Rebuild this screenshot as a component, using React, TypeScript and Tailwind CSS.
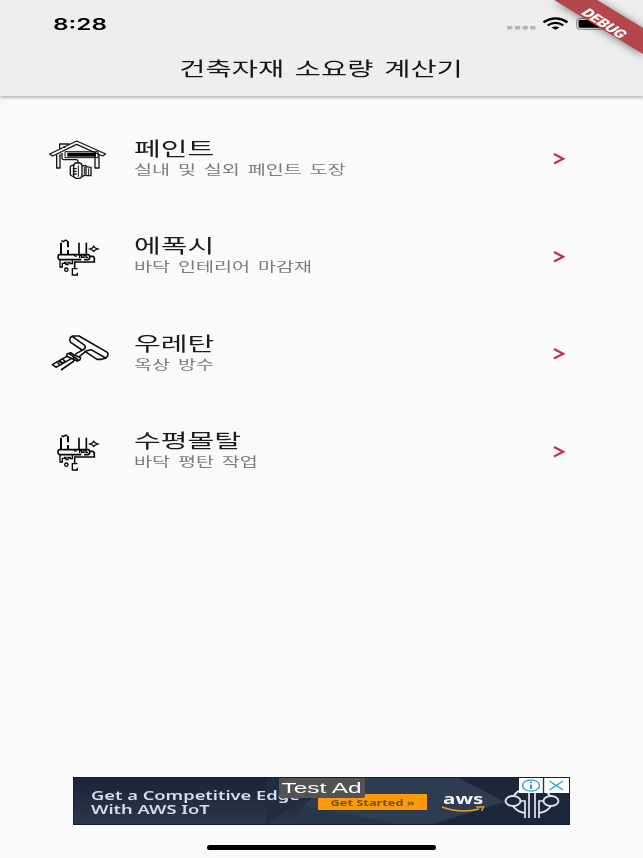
import React from 'react';

const kr = "font-['Noto_Sans_CJK_KR',sans-serif]";

function HouseIcon() {
  return (
    <svg width="90" height="60" viewBox="0 0 270 180" fill="none" stroke="#161616" strokeWidth="4" strokeLinejoin="round">
      <path d="M29 69L110 30L197 69L188 75L110 40L38 75Z" />
      <path d="M59 54V39H86V41M70 48H77" />
      <path d="M50 71V111H60V68M165 68V111H177V71" />
      <path d="M75 62H174V80H75Z" strokeWidth="3" />
      <path d="M82 71H168" stroke="#000" strokeWidth="12" />
      <path d="M66 66V82Q66 86 72 86H108Q114 86 114 92V97" />
      <path d="M105 96H119Q126 98 126 105V137L119 142H107L101 137V105Z" />
      <path d="M102 101L91 106V132L102 138M98 113H110M98 121H110M98 129H110M126 105L138 103V132L126 136M139 107L153 109V134H139" />
      <path d="M115 103V137M133 108V130M146 112V132" strokeWidth="3" />
    </svg>
  );
}

function TrowelIcon() {
  return (
    <svg width="90" height="60" viewBox="0 0 270 180" fill="none" stroke="#080808" strokeWidth="5">
      <path d="M63 44V80M84 40V58M84 66V80" strokeWidth="6" />
      <path d="M64 38L70 41L77 36L83 40" strokeWidth="4" />
      <path d="M117 44V82M139 44V79" />
      <path d="M58 80H145Q149 80 149 88Q149 95 143 95H132M124 95H58Q54 94 54 88Q54 80 58 80" />
      <path d="M102 80Q103 86 110 84M119 91V83H125V88H132V82H138V88H144" strokeWidth="4" />
      <path d="M149 85H158Q164 87 163 94V102H104V120" />
      <path d="M60 96V117H67V106H74V103H78V110H84V103H90V107H97V97" strokeWidth="4" />
      <circle cx="79" cy="125" r="5" strokeWidth="4" />
      <path d="M112 122H97V141H112V134" strokeWidth="4" />
      <path d="M149 63L157 60L161 55L166 60L174 63L166 66L161 70L157 66Z" strokeWidth="4" />
    </svg>
  );
}

function RollerIcon() {
  return (
    <svg width="90" height="60" viewBox="0 0 270 180" fill="none" stroke="#0c0c0c" strokeWidth="4.8" strokeLinejoin="round">
      <path d="M89 36L98 30H117L202 79Q206 83 203 90L197 97L184 100H171L135 76L153 71L197 96M97 31L134 58Q138 64 133 69L126 72L92 49Q87 42 91 35" />
      <path d="M131 70L105 85M137 76L118 92M81 84L92 80L101 86L122 95L120 101L112 105L80 91ZM87 83L114 101" />
      <path d="M80 91L37 116L50 125M102 105L63 132M94 98L48 124M51 108L60 117M59 104L69 113M68 99L75 106L67 113L58 106" />
      <path d="M100 91L102 105" />
    </svg>
  );
}

function Row({ icon, title, sub }: { icon: React.ReactNode; title: string; sub: string }) {
  return (
    <li className="flex h-[97.6px] items-start pl-10">
      <div className="h-[60px] w-[90px] shrink-0 pt-[20.5px]">{icon}</div>
      <div className="flex-1 pt-[24.5px] pl-[4px]">
        <div className={`${kr} h-[26px] origin-left scale-x-[1.5] text-[19.4px] leading-[26px] whitespace-nowrap text-[#1b1b1b]`}>{title}</div>
        <div className={`${kr} h-[16px] origin-left scale-x-[1.53] text-[12.8px] leading-[16px] [word-spacing:2.3px] whitespace-nowrap text-[#7c7c7c]`}>{sub}</div>
      </div>
      <svg className="mt-[42px] mr-[77px] shrink-0" width="14" height="14" viewBox="0 0 14 14" fill="none" stroke="#c2286a" strokeWidth="2.2">
        <path d="M2 2L11.2 6.8L2 11.6" />
      </svg>
    </li>
  );
}

export default function App() {
  return (
    <div className="relative flex h-[858px] w-[643px] flex-col overflow-hidden bg-[#fafafa]">
      <header className="flex h-24 shrink-0 flex-col bg-[#eeeeee] shadow-[0_1px_4px_rgba(0,0,0,0.4)]">
        <div className="flex h-[46px] items-center pl-[53px]">
          <span className="w-[453px] pt-[2px]">
            <span className="inline-block origin-left scale-x-[1.52] font-[Inter] text-[16px] leading-6 font-semibold text-black">8:28</span>
          </span>
          <svg width="112" height="20" viewBox="0 0 112 20" fill="none">
            <g fill="#b5b5b5">
              <rect x="1" y="13" width="5.5" height="3.5" rx="1" />
              <rect x="8.8" y="13" width="5.5" height="3.5" rx="1" />
              <rect x="16.4" y="13" width="5.5" height="3.5" rx="1" />
              <rect x="24" y="13" width="5.5" height="3.5" rx="1" />
            </g>
            <g stroke="#000" strokeWidth="2.3">
              <path d="M37.5 9.3Q49.5 1.6 61.5 9.3" />
              <path d="M41.7 12.4Q49.5 7.4 57.3 12.4" />
            </g>
            <path d="M45.5 14.6Q49.5 12.4 53.5 14.6L49.5 16.8Z" fill="#000" />
            <rect x="70.5" y="5.5" width="31" height="10.8" rx="3" stroke="#888" />
            <rect x="72.5" y="7" width="27" height="7.8" rx="1.2" fill="#000" />
          </svg>
        </div>
        <h1 className={`${kr} flex h-[44px] items-center justify-center text-[19.5px] leading-[30px] text-[#161616]`}>
          <span className="scale-x-[1.46] [word-spacing:3px] whitespace-nowrap">건축자재 소요량 계산기</span>
        </h1>
      </header>

      <ul className="flex flex-1 flex-col pt-[14px]">
        <Row icon={<HouseIcon />} title="페인트" sub="실내 및 실외 페인트 도장" />
        <Row icon={<TrowelIcon />} title="에폭시" sub="바닥 인테리어 마감재" />
        <Row icon={<RollerIcon />} title="우레탄" sub="옥상 방수" />
        <Row icon={<TrowelIcon />} title="수평몰탈" sub="바닥 평탄 작업" />
      </ul>

      <div className="relative ml-[73px] flex h-12 w-[497px] shrink-0 items-start overflow-hidden border border-[#151e30] bg-linear-to-b from-[#1b2438] to-[#29364c]">
        <svg className="absolute inset-0" width="497" height="48" viewBox="0 0 497 48">
          <path d="M192 0H265L196 43L192 48Z" fill="#202c42" />
          <path d="M262 0H385L431 24L355 46H322L229 28Z" fill="#2d3c50" />
          <path d="M385 0H497V48H355L431 24Z" fill="#1c273c" />
          <path d="M229 28L322 46L355 48H219Z" fill="#27354b" />
        </svg>
        <div className="relative w-[244px] pt-[11px] pl-[17px]">
          <div className="origin-left scale-x-[1.525] font-['Noto_Sans'] text-[12px] leading-[14.3px] font-semibold whitespace-nowrap text-[#d7deea]">
            Get a Competitive Edge<br />With AWS IoT
          </div>
        </div>
        <div className="relative mt-[16px] flex h-4 w-[109px] items-center justify-center bg-[#fb9a0a]">
          <span className="scale-x-[1.42] pt-px font-['Noto_Sans'] text-[9px] leading-4 font-bold whitespace-nowrap text-[#79501a]">Get Started »</span>
        </div>
        <div className="relative ml-[15px] flex h-9 w-[42px] flex-col items-center pt-[13px]">
          <span className="h-[16px] scale-x-[1.42] font-['Open_Sans'] text-[14.5px] leading-[16px] font-bold text-[#f3f5f8]">aws</span>
          <svg className="-mt-[1px] shrink-0" width="44" height="8" viewBox="0 0 44 8" fill="none" stroke="#ee9827" strokeWidth="1.5">
            <path d="M1 1Q20 8 38 3M35 1L42.5 1L40.5 5" />
          </svg>
        </div>
        <svg className="relative mt-[7px] ml-[19px]" width="58" height="36" viewBox="0 0 58 36" fill="none" stroke="#e0e7f0" strokeWidth="1.9">
          <ellipse cx="10" cy="16" rx="7.5" ry="5" />
          <ellipse cx="48" cy="16" rx="7.5" ry="5" />
          <path d="M11 11Q14 5 22 4Q29 0 36 4Q44 5 47 11M10 21Q14 27 22 28M48 21Q44 27 36 28" />
          <path d="M17 16H22V33M41 16H36V33M26 6V33M32 6V33" strokeWidth="1.7" />
        </svg>
        <div className="absolute top-[0px] left-[205px] flex h-5 w-[86px] items-center justify-center rounded-b-[2px] bg-[#535353]">
          <span className="scale-x-[1.63] font-['Liberation_Sans'] text-[15px] leading-5 whitespace-nowrap text-white">Test Ad</span>
        </div>
        <svg className="absolute top-0 right-0" width="50" height="15" viewBox="0 0 50 15" fill="none" stroke="#25a3c4" strokeWidth="1.4">
          <path d="M0 0H50V15H0Z" fill="#fff" stroke="none" />
          <path d="M24.5 0V15" stroke="#273449" />
          <ellipse cx="12" cy="7.5" rx="8.5" ry="5.6" />
          <path d="M12 6.5V11M12 3.5V5" strokeWidth="2" />
          <path d="M30.5 3L44 12M44 3L30.5 12" />
        </svg>
      </div>
      <div className="mt-5 mb-[8px] ml-[207px] h-[5px] w-[229px] shrink-0 rounded-full bg-black" />

      <svg className="absolute top-0 right-0 drop-shadow-[0_1px_4px_rgba(0,0,0,0.5)]" width="103" height="70" viewBox="0 0 103 70">
        <path d="M14 0H57L103 28V54Z" fill="#b4474c" />
        <text transform="translate(64.5 23.5) scale(1.57 1) rotate(45)" textAnchor="middle" y="3.9" fontFamily="Roboto" fontWeight="900" fontSize="11.2" fill="#fff">DEBUG</text>
      </svg>
    </div>
  );
}
